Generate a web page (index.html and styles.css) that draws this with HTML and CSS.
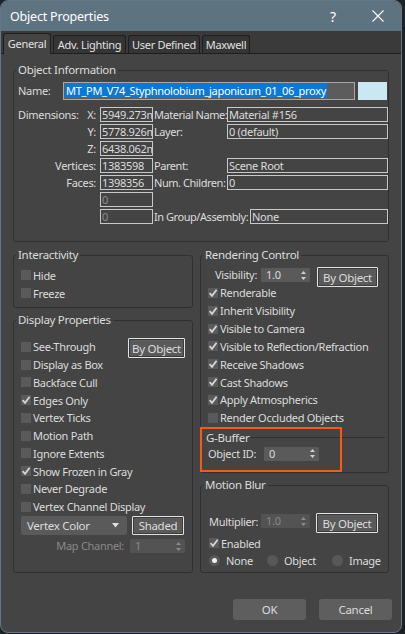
FILE: index.html
```html
<!DOCTYPE html>
<html lang="en">
<head>
    <meta charset="UTF-8">
    <meta name="viewport" content="width=device-width, initial-scale=1.0">
    <title>Object Properties</title>
    <link rel="stylesheet" href="styles.css">
</head>
<body>
    <div class="window">
        <!-- Title bar -->
        <div class="titlebar">
            <span class="title">Object Properties</span>
            <span class="help">?</span>
            <span class="close">
                <svg width="12" height="12" viewBox="0 0 12 12"><path d="M0.5 0.5 L11.5 11.5 M11.5 0.5 L0.5 11.5" stroke="#ffffff" stroke-width="1.1" fill="none"/></svg>
            </span>
        </div>

        <!-- Tabs -->
        <div class="tabs">
            <div class="tab active tab-general">General</div>
            <div class="tab tab-light">Adv. Lighting</div>
            <div class="tab tab-user">User Defined</div>
            <div class="tab tab-maxwell">Maxwell</div>
        </div>

        <div class="panel">
            <!-- Object Information -->
            <fieldset class="group info">
                <legend>Object Information</legend>
                <div class="info-body">
                    <div class="name-row">
                        <span class="name-lbl">Name:</span>
                        <div class="name-field"><span class="sel">MT_PM_V74_Styphnolobium_japonicum_01_06_proxy</span></div>
                        <div class="swatch"></div>
                    </div>
                    <div class="dims">
                        <div class="row">
                            <span class="lbl-a split"><span>Dimensions:</span><span>X:</span></span>
                            <span class="field short">5949.273m</span>
                            <span class="lbl-b">Material Name:</span>
                            <span class="field long">Material #156</span>
                        </div>
                        <div class="row">
                            <span class="lbl-a">Y:</span>
                            <span class="field short">5778.926m</span>
                            <span class="lbl-b">Layer:</span>
                            <span class="field long">0 (default)</span>
                        </div>
                        <div class="row">
                            <span class="lbl-a">Z:</span>
                            <span class="field short">6438.062m</span>
                        </div>
                        <div class="row">
                            <span class="lbl-a">Vertices:</span>
                            <span class="field short">1383598</span>
                            <span class="lbl-b">Parent:</span>
                            <span class="field long">Scene Root</span>
                        </div>
                        <div class="row">
                            <span class="lbl-a">Faces:</span>
                            <span class="field short">1398356</span>
                            <span class="lbl-b">Num. Children:</span>
                            <span class="field long">0</span>
                        </div>
                        <div class="row">
                            <span class="lbl-a"></span>
                            <span class="field short muted">0</span>
                        </div>
                        <div class="row">
                            <span class="lbl-a"></span>
                            <span class="field short muted">0</span>
                            <span class="lbl-b wide">In Group/Assembly:</span>
                            <span class="field mid">None</span>
                        </div>
                    </div>
                </div>
            </fieldset>

            <div class="columns">
                <!-- Left column -->
                <div class="col col-left">
                    <fieldset class="group interact">
                        <legend>Interactivity</legend>
                        <div class="interact-body">
                            <div class="check"><span class="box"></span>Hide</div>
                            <div class="check"><span class="box"></span>Freeze</div>
                        </div>
                    </fieldset>

                    <fieldset class="group display">
                        <legend>Display Properties</legend>
                        <div class="display-body">
                            <div class="check row-btn"><span class="box"></span>See-Through
                                <button class="btn focus btn-see">By Object</button>
                            </div>
                            <div class="check"><span class="box"></span>Display as Box</div>
                            <div class="check"><span class="box"></span>Backface Cull</div>
                            <div class="check"><span class="box"><svg width="10" height="10" viewBox="0 0 10 10"><path d="M1.6 5.2 L4 7.8 L8.6 1.8" stroke="#d6d6d6" stroke-width="1.8" fill="none"/></svg></span>Edges Only</div>
                            <div class="check"><span class="box"></span>Vertex Ticks</div>
                            <div class="check"><span class="box"></span>Motion Path</div>
                            <div class="check"><span class="box"></span>Ignore Extents</div>
                            <div class="check"><span class="box"><svg width="10" height="10" viewBox="0 0 10 10"><path d="M1.6 5.2 L4 7.8 L8.6 1.8" stroke="#d6d6d6" stroke-width="1.8" fill="none"/></svg></span>Show Frozen in Gray</div>
                            <div class="check"><span class="box"></span>Never Degrade</div>
                            <div class="check"><span class="box"></span>Vertex Channel Display</div>
                            <div class="combo-row">
                                <div class="combo">Vertex Color
                                    <svg class="combo-arrow" width="7" height="5" viewBox="0 0 7 5"><path d="M0 0 L7 0 L3.5 4.5 Z" fill="#e0e0e0"/></svg>
                                </div>
                                <button class="btn focus btn-shaded">Shaded</button>
                            </div>
                            <div class="map-row">
                                <span class="map-lbl">Map Channel:</span>
                                <div class="spinner disabled sp-map">1
                                    <svg class="arrows" width="5" height="9" viewBox="0 0 5 9"><path d="M2.5 0 L5 3 L0 3 Z M0 6 L5 6 L2.5 9 Z" fill="#8a8a8a"/></svg>
                                </div>
                            </div>
                        </div>
                    </fieldset>
                </div>

                <!-- Right column -->
                <div class="col col-right">
                    <fieldset class="group render">
                        <legend>Rendering Control</legend>
                        <div class="render-body">
                            <div class="vis-row">
                                <span class="vis-lbl">Visibility:</span>
                                <div class="spinner sp-vis">1.0
                                    <svg class="arrows" width="5" height="9" viewBox="0 0 5 9"><path d="M2.5 0 L5 3 L0 3 Z M0 6 L5 6 L2.5 9 Z" fill="#d0d0d0"/></svg>
                                </div>
                                <button class="btn focus btn-vis">By Object</button>
                            </div>
                            <div class="check tall"><span class="box"><svg width="10" height="10" viewBox="0 0 10 10"><path d="M1.6 5.2 L4 7.8 L8.6 1.8" stroke="#d6d6d6" stroke-width="1.8" fill="none"/></svg></span>Renderable</div>
                            <div class="check tall"><span class="box"><svg width="10" height="10" viewBox="0 0 10 10"><path d="M1.6 5.2 L4 7.8 L8.6 1.8" stroke="#d6d6d6" stroke-width="1.8" fill="none"/></svg></span>Inherit Visibility</div>
                            <div class="check tall"><span class="box"><svg width="10" height="10" viewBox="0 0 10 10"><path d="M1.6 5.2 L4 7.8 L8.6 1.8" stroke="#d6d6d6" stroke-width="1.8" fill="none"/></svg></span>Visible to Camera</div>
                            <div class="check tall"><span class="box"><svg width="10" height="10" viewBox="0 0 10 10"><path d="M1.6 5.2 L4 7.8 L8.6 1.8" stroke="#d6d6d6" stroke-width="1.8" fill="none"/></svg></span>Visible to Reflection/Refraction</div>
                            <div class="check tall"><span class="box"><svg width="10" height="10" viewBox="0 0 10 10"><path d="M1.6 5.2 L4 7.8 L8.6 1.8" stroke="#d6d6d6" stroke-width="1.8" fill="none"/></svg></span>Receive Shadows</div>
                            <div class="check tall"><span class="box"><svg width="10" height="10" viewBox="0 0 10 10"><path d="M1.6 5.2 L4 7.8 L8.6 1.8" stroke="#d6d6d6" stroke-width="1.8" fill="none"/></svg></span>Cast Shadows</div>
                            <div class="check tall"><span class="box"><svg width="10" height="10" viewBox="0 0 10 10"><path d="M1.6 5.2 L4 7.8 L8.6 1.8" stroke="#d6d6d6" stroke-width="1.8" fill="none"/></svg></span>Apply Atmospherics</div>
                            <div class="check tall"><span class="box"></span>Render Occluded Objects</div>
                        </div>
                        <fieldset class="gbuffer">
                            <legend>G-Buffer</legend>
                            <div class="gbuffer-body">
                                <span class="id-lbl">Object ID:</span>
                                <div class="spinner sp-id">0
                                    <svg class="arrows" width="5" height="9" viewBox="0 0 5 9"><path d="M2.5 0 L5 3 L0 3 Z M0 6 L5 6 L2.5 9 Z" fill="#d0d0d0"/></svg>
                                </div>
                            </div>
                        </fieldset>
                    </fieldset>

                    <fieldset class="group motion">
                        <legend>Motion Blur</legend>
                        <div class="motion-body">
                            <div class="mult-row">
                                <span class="mult-lbl">Multiplier:</span>
                                <div class="spinner disabled sp-mult">1.0
                                    <svg class="arrows" width="5" height="9" viewBox="0 0 5 9"><path d="M2.5 0 L5 3 L0 3 Z M0 6 L5 6 L2.5 9 Z" fill="#8a8a8a"/></svg>
                                </div>
                                <button class="btn focus btn-mult">By Object</button>
                            </div>
                            <div class="check enabled"><span class="box"><svg width="10" height="10" viewBox="0 0 10 10"><path d="M1.6 5.2 L4 7.8 L8.6 1.8" stroke="#d6d6d6" stroke-width="1.8" fill="none"/></svg></span>Enabled</div>
                            <div class="radios">
                                <span class="radio r-none"><span class="dot on"></span>None</span>
                                <span class="radio r-object"><span class="dot"></span>Object</span>
                                <span class="radio"><span class="dot"></span>Image</span>
                            </div>
                        </div>
                    </fieldset>
                </div>
            </div>
        </div>

        <!-- Buttons -->
        <div class="footer">
            <button class="btn dlg">OK</button>
            <button class="btn dlg">Cancel</button>
        </div>

        <!-- Annotation frame -->
        <div class="highlight"></div>
    </div>
</body>
</html>
```

FILE: styles.css
```css
/* Base */
body {
    margin: 0;
    background-color: #1c2226;
    font-family: 'Noto Sans', sans-serif;
    font-size: 11px;
    letter-spacing: -0.3px;
    color: #dcdcdc;
}

.window {
    width: 402px;
    height: 633px;
    box-sizing: border-box;
    border: 1px solid #62788a;
    border-radius: 8px;
    background-color: #444444;
    overflow: hidden;
    position: relative;
}

/* Title bar */
.titlebar {
    height: 30px;
    background-color: #5e7380;
    display: flex;
    align-items: center;
    padding-left: 9px;
    color: #ffffff;
}

.title {
    flex: 1;
    font-size: 12.5px;
    letter-spacing: -0.2px;
}

.help {
    width: 44px;
    text-align: center;
    font-size: 14px;
}

.close {
    width: 46px;
    display: flex;
    justify-content: center;
}

/* Tabs */
.tabs {
    height: 22px;
    background-color: #3a3a3a;
    border-bottom: 1px solid #1e1e1e;
    display: flex;
    align-items: flex-end;
    gap: 2px;
    padding-left: 2px;
}

.tab {
    height: 18px;
    box-sizing: border-box;
    border: 1px solid #1e1e1e;
    border-bottom: none;
    border-radius: 3px 3px 0 0;
    background-color: #353535;
    display: flex;
    align-items: center;
    justify-content: center;
    white-space: nowrap;
    color: #e0e0e0;
}

.tab.active {
    height: 21px;
    margin-bottom: -1px;
    background-color: #444444;
    padding-bottom: 1px;
}

.tab-general { width: 48px; }
.tab-light { width: 73px; }
.tab-user { width: 72px; }
.tab-maxwell { width: 48px; }

/* Panel */
.panel {
    padding: 8px 12px 0 12px;
}

.group {
    margin: 0;
    padding: 0;
    border: 1px solid #303030;
    border-radius: 3px;
    min-width: 0;
    box-sizing: border-box;
}

.group legend,
.gbuffer legend {
    padding: 0 2px;
    margin-left: 2px;
    line-height: 16px;
    font-size: 11.5px;
}

/* Object Information */
.info {
    width: 376px;
}

.info-body {
    padding: 4px 0 15px 4px;
}

.name-row {
    display: flex;
    height: 18px;
}

.name-lbl {
    width: 45px;
    line-height: 18px;
}

.name-field {
    width: 292px;
    box-sizing: border-box;
    border: 1px solid #a8a8a8;
    background-color: #5c5c5c;
    padding-left: 1px;
    line-height: 16px;
    overflow: hidden;
    white-space: nowrap;
}

.sel {
    background-color: #0a78d7;
    color: #ffffff;
    padding: 0 1px;
}

.swatch {
    width: 29px;
    margin-left: 3px;
    background-color: #c9e8f2;
}

.dims {
    margin-top: 7px;
}

.row {
    display: flex;
    height: 17px;
}

.lbl-a {
    width: 78px;
    margin-right: 4px;
    text-align: right;
    line-height: 15px;
    white-space: nowrap;
}

.split {
    display: flex;
    justify-content: space-between;
}

.lbl-b {
    width: 73px;
    margin-left: 1px;
    line-height: 15px;
    white-space: nowrap;
    letter-spacing: -0.45px;
}

.lbl-b.wide {
    width: 96px;
}

.field {
    height: 15px;
    box-sizing: border-box;
    border: 1px solid #c8c8c8;
    background-color: #444444;
    padding-left: 1px;
    line-height: 13px;
    overflow: hidden;
    white-space: nowrap;
    text-overflow: clip;
}

.field.short { width: 53px; }
.field.long { width: 161px; }
.field.mid { width: 138px; }

.field.muted {
    color: #8a8a8a;
}

/* Columns */
.columns {
    display: flex;
    gap: 7px;
    margin-top: 5px;
}

.col {
    display: flex;
    flex-direction: column;
    gap: 4px;
}

.col-left { width: 180px; }
.col-right { width: 189px; }

/* Checkboxes */
.check {
    display: flex;
    align-items: center;
    height: 18px;
    white-space: nowrap;
}

.box {
    width: 10px;
    height: 10px;
    flex: none;
    background-color: #5a5a5a;
    margin-right: 2px;
    display: flex;
}

.interact-body {
    padding: 3px 0 5px 7px;
}

.display-body {
    padding: 10px 7px 19px 7px;
}

.display-body .check {
    height: 17.75px;
}

.row-btn {
    align-items: flex-start;
    line-height: 18px;
}

.row-btn .box {
    margin-top: 4px;
}

/* Buttons */
.btn {
    font-family: 'Noto Sans', sans-serif;
    font-size: 11.5px;
    letter-spacing: -0.3px;
    color: #dcdcdc;
    background-color: #5a5a5a;
    border: none;
    border-radius: 2px;
    padding: 0;
    box-sizing: border-box;
    flex: none;
}

.btn.focus {
    border: 1px solid #e2e2e2;
    border-radius: 1px;
    box-shadow: inset 0 0 0 1px #3c3c3c;
}

.btn-see {
    width: 57px;
    height: 20px;
    margin-left: auto;
}

.combo-row {
    display: flex;
    margin-top: 0.5px;
    height: 19px;
}

.combo {
    width: 106px;
    height: 19px;
    box-sizing: border-box;
    background-color: #5a5a5a;
    border-radius: 2px;
    padding-left: 6px;
    padding-right: 8px;
    line-height: 19px;
    display: flex;
    align-items: center;
    justify-content: space-between;
    font-size: 11.5px;
}

.btn-shaded {
    width: 52px;
    height: 19px;
    margin-left: 5px;
}

.map-row {
    display: flex;
    margin-top: 4px;
    height: 14px;
}

.map-lbl {
    width: 105px;
    text-align: right;
    line-height: 14px;
    color: #8a8a8a;
}

/* Spinners */
.spinner {
    height: 14px;
    box-sizing: border-box;
    background-color: #5a5a5a;
    border-radius: 1px;
    padding-left: 5px;
    padding-right: 4px;
    line-height: 14px;
    display: flex;
    align-items: center;
    justify-content: space-between;
    flex: none;
}

.spinner.disabled {
    background-color: #535353;
    color: #8a8a8a;
}

.sp-map {
    width: 55px;
    margin-left: 6px;
}

/* Rendering Control */
.render {
    height: 226px;
}

.render-body {
    padding: 4px 0 0 7px;
}

.vis-row {
    display: flex;
    height: 17px;
    align-items: flex-start;
}

.vis-lbl {
    width: 46px;
    margin-left: 7px;
    line-height: 16px;
}

.sp-vis {
    width: 49px;
    margin-top: 1px;
}

.btn-vis {
    width: 61px;
    height: 20px;
    margin-left: 7px;
}

.check.tall {
    height: 17.85px;
}

.gbuffer {
    margin: 3px 3px 0 2px;
    padding: 0;
    border: none;
    border-top: 1px solid #303030;
    min-width: 0;
}

.gbuffer legend {
    margin-left: 1px;
}

.gbuffer-body {
    display: flex;
    height: 16px;
    padding-left: 5px;
    align-items: flex-start;
}

.id-lbl {
    width: 56px;
    line-height: 16px;
}

.sp-id {
    width: 55px;
    margin-top: 1px;
}

/* Motion Blur */
.motion-body {
    padding: 20px 0 4px 8px;
}

.mult-row {
    display: flex;
    height: 20px;
    align-items: flex-start;
}

.mult-lbl {
    width: 52px;
    line-height: 16px;
    margin-top: 1px;
}

.sp-mult {
    width: 49px;
    margin-top: 1px;
}

.btn-mult {
    width: 62px;
    height: 20px;
    margin-left: 6px;
}

.check.enabled {
    height: 16px;
    margin-top: 2px;
}

.radios {
    display: flex;
    align-items: center;
    height: 16px;
    margin-top: 1px;
}

.radio {
    display: flex;
    align-items: center;
}

.r-none { width: 58px; }
.r-object { width: 65px; }

.dot {
    width: 11px;
    height: 11px;
    border-radius: 50%;
    background-color: #585858;
    margin-right: 6px;
    display: flex;
    align-items: center;
    justify-content: center;
}

.dot.on::after {
    content: '';
    width: 5px;
    height: 5px;
    border-radius: 50%;
    background-color: #f0f0f0;
}

/* Footer */
.footer {
    display: flex;
    justify-content: flex-end;
    gap: 13px;
    padding-right: 9px;
    margin-top: 26px;
}

.btn.dlg {
    width: 73px;
    height: 21px;
    border-radius: 3px;
    background-color: #5e5e5e;
}

/* Orange annotation frame */
.highlight {
    position: absolute;
    left: 199px;
    top: 426px;
    width: 142px;
    height: 45px;
    box-sizing: border-box;
    border: 2px solid #f85a16;
}
```
